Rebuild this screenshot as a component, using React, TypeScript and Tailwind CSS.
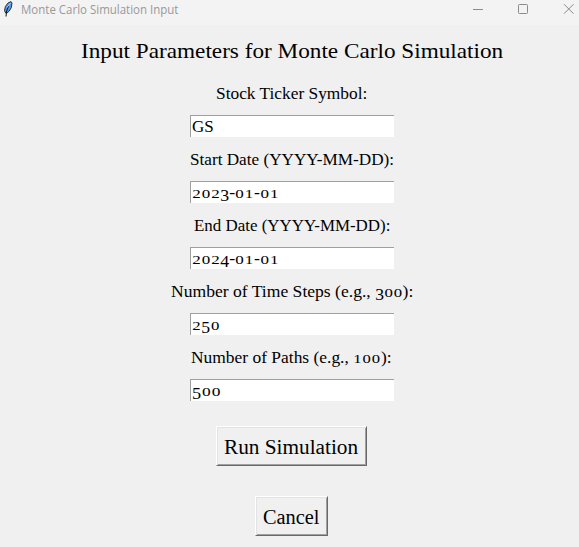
import { useLayoutEffect, useRef } from "react";

const serif = "font-['Georgia','Liberation_Serif',serif]";

/* Old-style numerals: 0-2 sit at x-height, 3/4/5/7/9 descend. */
function Glyphs({ text }: { text: string }) {
  return (
    <>
      {text.split(/(\d)/).map((part, i) => {
        if (/^[012]$/.test(part)) {
          return (
            <span key={i} className="inline-block w-[9px] text-center text-[13.5px] leading-none">
              <span className="inline-block scale-x-[1.2]">{part}</span>
            </span>
          );
        }
        if (/^\d$/.test(part)) {
          return (
            <span key={i} className="relative top-[3px] inline-block leading-none">
              {part}
            </span>
          );
        }
        return <span key={i}>{part}</span>;
      })}
    </>
  );
}

/* Stretches one line of text to a given width. */
function Fit({ text, width }: { text: string; width: number }) {
  const ref = useRef<HTMLSpanElement>(null);
  useLayoutEffect(() => {
    const el = ref.current;
    if (el) el.style.transform = `scaleX(${width / el.offsetWidth})`;
  }, [text, width]);
  return (
    <span className="block text-left" style={{ width }}>
      <span ref={ref} className="inline-block origin-left whitespace-pre">
        <Glyphs text={text} />
      </span>
    </span>
  );
}

const fields = [
  { label: "Stock Ticker Symbol:", width: 151, value: "GS", valueWidth: 22 },
  { label: "Start Date (YYYY-MM-DD):", width: 204, value: "2023-01-01", valueWidth: 87 },
  { label: "End Date (YYYY-MM-DD):", width: 196, value: "2024-01-01", valueWidth: 87 },
  { label: "Number of Time Steps (e.g., 300):", width: 242, value: "250", valueWidth: 28 },
  { label: "Number of Paths (e.g., 100):", width: 201, value: "500", valueWidth: 29 },
];

function Button({ text, width, className }: { text: string; width: number; className: string }) {
  return (
    <button
      className={`${className} mr-px flex h-10 items-center justify-center border border-t-white border-l-white border-r-[#696969] border-b-[#696969] pt-px pr-px text-[20px] leading-6 shadow-[inset_1px_1px_0_#e3e3e3,inset_-1px_-1px_0_#a0a0a0]`}
    >
      <Fit text={text} width={width} />
    </button>
  );
}

export default function App() {
  return (
    <div className={`h-[547px] w-[579px] overflow-hidden bg-[#f0f0f0] text-black ${serif}`}>
      <header className="flex h-[25px] items-start bg-[#f3f3f3] font-['Open_Sans','Noto_Sans',sans-serif] text-[12px] text-[#999]">
        <svg className="ml-[3px] mt-[1px] h-4 w-[10px] shrink-0" viewBox="0 0 10 16">
          <path d="M2.6 12 1.5 9.5 2.4 5.5 5 2 8 .6 9 2 8.3 6.5 6.3 10 4 12Z" fill="#539bea" stroke="#222" strokeWidth=".9" />
          <path d="M5.6 5 3.6 10 3 15.5" fill="none" stroke="#111" strokeWidth="1" />
          <path d="M7.4 2 4 6.5" stroke="#b9dcff" strokeWidth=".8" />
        </svg>
        <span className="ml-2 mt-[1px] leading-[18px]">
          <Fit text="Monte Carlo Simulation Input" width={157} />
        </span>
        <svg className="ml-auto h-[25px] w-[110px] shrink-0" viewBox="0 0 110 25" fill="none" stroke="#8c8c8c">
          <path d="M4 9.5H14" />
          <rect x="49.5" y="4.5" width="9" height="9" rx=".8" />
          <path d="M95 4.2 104.5 13.7M104.5 4.2 95 13.7" />
        </svg>
      </header>
      <main className="flex flex-col items-center pl-[5px]">
        <h1 className="mt-[13px] text-[22px] leading-[26px]">
          <Fit text="Input Parameters for Monte Carlo Simulation" width={422} />
        </h1>
        <div className="mt-[18px] flex flex-col">
          {fields.map((f) => (
            <label key={f.label} className="flex h-[66px] flex-col items-center text-[17px]">
              <span className={`h-[33px] leading-[24px] ${f.width % 2 ? "mr-px" : ""}`}>
                <Fit text={f.label} width={f.width} />
              </span>
              <span className="h-[22px] w-[204px] border-t border-l border-[#a0a0a0] bg-white pl-[1px] leading-[22px]">
                <Fit text={f.value} width={f.valueWidth} />
              </span>
            </label>
          ))}
        </div>
        <Button text="Run Simulation" width={134} className="mt-[14px] w-[151px]" />
        <Button text="Cancel" width={57} className="mt-[30px] w-[73px]" />
      </main>
    </div>
  );
}
